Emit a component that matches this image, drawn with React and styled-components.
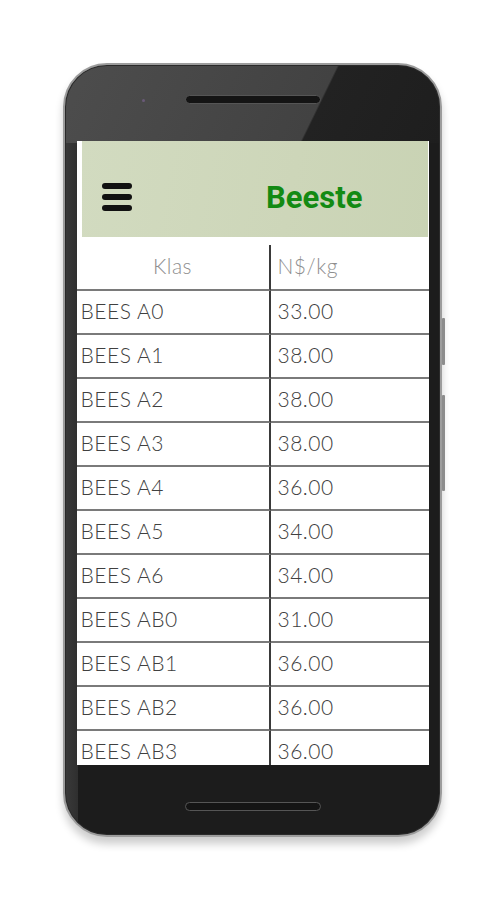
import React from "react";
import styled, { createGlobalStyle } from "styled-components";

const GlobalStyle = createGlobalStyle`
  html, body {
    margin: 0;
    padding: 0;
    background: #ffffff;
  }
  body {
    font-family: "Lato", "Liberation Sans", sans-serif;
  }
`;

const rows = [
  ["BEES A0", "33.00"],
  ["BEES A1", "38.00"],
  ["BEES A2", "38.00"],
  ["BEES A3", "38.00"],
  ["BEES A4", "36.00"],
  ["BEES A5", "34.00"],
  ["BEES A6", "34.00"],
  ["BEES AB0", "31.00"],
  ["BEES AB1", "36.00"],
  ["BEES AB2", "36.00"],
  ["BEES AB3", "36.00"],
];

const Page = styled.div`
  width: 504px;
  height: 900px;
  display: flex;
  justify-content: center;
  padding-top: 63px;
  box-sizing: border-box;
`;

const Phone = styled.div`
  position: relative;
  width: 379px;
  height: 774px;
  box-sizing: border-box;
  border: 2px solid #9c9c9c;
  border-radius: 44px;
  padding: 0 11px 0 12px;
  display: flex;
  flex-direction: column;
  background:
    linear-gradient(116deg, #4d4d4d 0%, #424242 66%, #222 66.5%, #1e1e1e 100%) no-repeat top left / 100% 78px,
    linear-gradient(to right, #3a3a3a 0, #2f2f2f 13px, transparent 13px) no-repeat left / 100% 100%,
    #1c1c1c;
  box-shadow: inset 0 0 0 1px #2a2a2a, 0 7px 9px rgba(0, 0, 0, 0.2);
`;

const SideButton = styled.div`
  position: absolute;
  right: -5px;
  top: ${(p) => p.$top}px;
  width: 3px;
  height: ${(p) => p.$h}px;
  background: #8c8c8c;
  border-radius: 1px;
`;

const TopBezel = styled.div`
  height: 76px;
  flex: none;
  position: relative;
  display: flex;
  justify-content: center;
  padding-top: 30px;
  box-sizing: border-box;
`;

const Camera = styled.div`
  position: absolute;
  left: 65px;
  top: 34px;
  width: 3px;
  height: 3px;
  border-radius: 50%;
  background: #6a5a78;
`;

const Speaker = styled.div`
  width: 136px;
  height: 9px;
  border-radius: 5px;
  background: #141414;
  border: 1.5px solid #555;
  box-sizing: border-box;
`;

const BottomBezel = styled.div`
  flex: 1;
  display: flex;
  justify-content: center;
  padding-top: 37px;
  box-sizing: border-box;
`;

const Screen = styled.div`
  height: 624px;
  flex: none;
  background: #ffffff;
  overflow: hidden;
  display: flex;
  flex-direction: column;
`;

const Header = styled.div`
  height: 96px;
  flex: none;
  margin: 0 1px 0 5px;
  background: linear-gradient(100deg, #d2dbc0 0%, #cdd6b9 60%, #c9d3b4 100%);
  display: flex;
  align-items: center;
  justify-content: space-between;
  padding: 16px 65px 0 20px;
  box-sizing: border-box;
`;

const Burger = styled.div`
  width: 30px;
  display: flex;
  flex-direction: column;
  gap: 5px;
`;

const Bar = styled.span`
  display: block;
  height: 6px;
  border-radius: 3px;
  background: #111;
`;

const Title = styled.h1`
  margin: 0;
  font-family: "Roboto", "Liberation Sans", sans-serif;
  font-weight: 700;
  font-size: 31px;
  color: #138a13;
`;

const Table = styled.div`
  margin-top: 8px;
  display: grid;
  grid-template-columns: 194px 1fr;
`;

const Cell = styled.div`
  height: ${(p) => (p.$head ? 46 : 44)}px;
  box-sizing: border-box;
  border-bottom: 2px solid #7a7a7a;
  border-right: ${(p) => (p.$first ? "2px solid #3a3a3a" : "none")};
  display: flex;
  align-items: center;
  justify-content: ${(p) => (p.$center ? "center" : "flex-start")};
  padding-left: ${(p) => (p.$center ? 0 : p.$first ? 4 : 7)}px;
  padding-bottom: 3px;
  font-size: 21px;
  font-weight: 300;
  letter-spacing: 0.5px;
  color: ${(p) => (p.$head ? "#8e8e8e" : "#404040")};
`;

export default function App() {
  return (
    <Page>
      <GlobalStyle />
      <Phone>
        <SideButton $top={253} $h={47} />
        <SideButton $top={330} $h={96} />
        <TopBezel>
          <Camera />
          <Speaker />
        </TopBezel>
        <Screen>
          <Header>
            <Burger>
              <Bar />
              <Bar />
              <Bar />
            </Burger>
            <Title>Beeste</Title>
          </Header>
          <Table>
            <Cell $first $center $head>Klas</Cell>
            <Cell $head>N$/kg</Cell>
            {rows.map(([klas, price]) => (
              <React.Fragment key={klas}>
                <Cell $first>{klas}</Cell>
                <Cell>{price}</Cell>
              </React.Fragment>
            ))}
          </Table>
        </Screen>
        <BottomBezel>
          <Speaker />
        </BottomBezel>
      </Phone>
    </Page>
  );
}
